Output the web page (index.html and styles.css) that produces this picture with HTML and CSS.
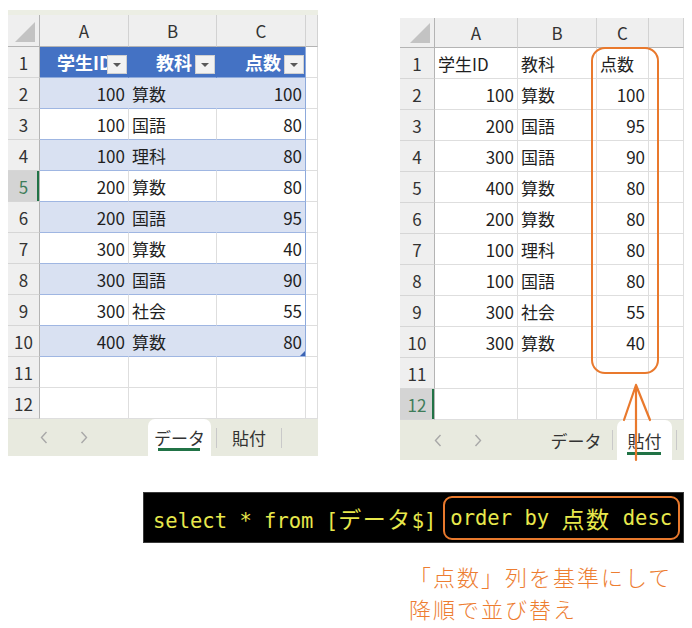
FILE: index.html
```html
<!DOCTYPE html>
<html lang="ja">
<head>
<meta charset="utf-8">
<title>Sheet sort</title>
<link rel="stylesheet" href="styles.css">
</head>
<body>
<div class="page">
  <div class="sheets">
    <div class="sheet sheet-left">
      <div class="strip"></div>
      <div class="grid grid-left">
        <div class="corner"></div>
        <div class="ch">A</div><div class="ch">B</div><div class="ch">C</div><div class="ch"></div>

        <div class="rh">1</div>
        <div class="th th-first">学生ID<span class="dd"></span></div>
        <div class="th">教科<span class="dd"></span></div>
        <div class="th tr">点数<span class="dd"></span></div>
        <div class="c"></div>

        <div class="rh">2</div>
        <div class="c num t band">100</div><div class="c txt t band">算数</div><div class="c num t band tr">100</div><div class="c"></div>
        <div class="rh">3</div>
        <div class="c num t">100</div><div class="c txt t">国語</div><div class="c num t tr">80</div><div class="c"></div>
        <div class="rh">4</div>
        <div class="c num t band">100</div><div class="c txt t band">理科</div><div class="c num t band tr">80</div><div class="c"></div>
        <div class="rh rh-sel">5</div>
        <div class="c num t">200</div><div class="c txt t">算数</div><div class="c num t tr">80</div><div class="c"></div>
        <div class="rh">6</div>
        <div class="c num t band">200</div><div class="c txt t band">国語</div><div class="c num t band tr">95</div><div class="c"></div>
        <div class="rh">7</div>
        <div class="c num t">300</div><div class="c txt t">算数</div><div class="c num t tr">40</div><div class="c"></div>
        <div class="rh">8</div>
        <div class="c num t band">300</div><div class="c txt t band">国語</div><div class="c num t band tr">90</div><div class="c"></div>
        <div class="rh">9</div>
        <div class="c num t">300</div><div class="c txt t">社会</div><div class="c num t tr">55</div><div class="c"></div>
        <div class="rh">10</div>
        <div class="c num t band">400</div><div class="c txt t band">算数</div><div class="c num t band tr handle">80</div><div class="c"></div>
        <div class="rh">11</div>
        <div class="c"></div><div class="c"></div><div class="c"></div><div class="c"></div>
        <div class="rh">12</div>
        <div class="c"></div><div class="c"></div><div class="c"></div><div class="c"></div>
      </div>
      <div class="tabbar">
        <div class="nav nav-left">
          <svg class="chev" width="8" height="13" viewBox="0 0 8 13"><path d="M6.5 1 L1.5 6.5 L6.5 12" /></svg>
          <svg class="chev" width="8" height="13" viewBox="0 0 8 13"><path d="M1.5 1 L6.5 6.5 L1.5 12" /></svg>
        </div>
        <div class="tab active tab-l1">データ</div>
        <div class="sep"></div>
        <div class="tab tab-l2">貼付</div>
        <div class="sep sep-flush"></div>
      </div>
    </div>

    <div class="sheet sheet-right">
      <div class="grid grid-right">
        <div class="corner"></div>
        <div class="ch">A</div><div class="ch">B</div><div class="ch">C</div><div class="ch"></div>

        <div class="rh">1</div>
        <div class="c txt">学生ID</div><div class="c txt">教科</div><div class="c txt">点数</div><div class="c"></div>
        <div class="rh">2</div>
        <div class="c num">100</div><div class="c txt">算数</div><div class="c num">100</div><div class="c"></div>
        <div class="rh">3</div>
        <div class="c num">200</div><div class="c txt">国語</div><div class="c num">95</div><div class="c"></div>
        <div class="rh">4</div>
        <div class="c num">300</div><div class="c txt">国語</div><div class="c num">90</div><div class="c"></div>
        <div class="rh">5</div>
        <div class="c num">400</div><div class="c txt">算数</div><div class="c num">80</div><div class="c"></div>
        <div class="rh">6</div>
        <div class="c num">200</div><div class="c txt">算数</div><div class="c num">80</div><div class="c"></div>
        <div class="rh">7</div>
        <div class="c num">100</div><div class="c txt">理科</div><div class="c num">80</div><div class="c"></div>
        <div class="rh">8</div>
        <div class="c num">100</div><div class="c txt">国語</div><div class="c num">80</div><div class="c"></div>
        <div class="rh">9</div>
        <div class="c num">300</div><div class="c txt">社会</div><div class="c num">55</div><div class="c"></div>
        <div class="rh">10</div>
        <div class="c num">300</div><div class="c txt">算数</div><div class="c num">40</div><div class="c"></div>
        <div class="rh">11</div>
        <div class="c"></div><div class="c"></div><div class="c"></div><div class="c"></div>
        <div class="rh rh-sel">12</div>
        <div class="c"></div><div class="c"></div><div class="c"></div><div class="c"></div>
      </div>
      <div class="tabbar tabbar-right">
        <div class="nav nav-right">
          <svg class="chev" width="8" height="13" viewBox="0 0 8 13"><path d="M6.5 1 L1.5 6.5 L6.5 12" /></svg>
          <svg class="chev" width="8" height="13" viewBox="0 0 8 13"><path d="M1.5 1 L6.5 6.5 L1.5 12" /></svg>
        </div>
        <div class="tab tab-r1">データ</div>
        <div class="sep"></div>
        <div class="tab active tab-r2">貼付</div>
        <div class="sep"></div>
      </div>

      <div class="highlight"></div>
      <svg class="arrow" width="40" height="110" viewBox="0 0 40 110">
        <path d="M16 25 L16 100 M16 25 L4 60 M16 25 L30 60" />
      </svg>
    </div>
  </div>

  <div class="sql">
    <span class="code">select * from [<span class="wide">データ</span>$]</span><span class="code boxed">order by <span class="wide">点数</span> desc</span>
  </div>

  <div class="caption">
    <div>「点数」列を基準にして</div>
    <div>降順で並び替え</div>
  </div>
</div>
</body>
</html>
```

FILE: styles.css
```css
html, body {
  margin: 0;
  padding: 0;
  background: #ffffff;
}

.page {
  width: 692px;
  height: 628px;
  overflow: hidden;
  font-family: "Noto Sans CJK JP", "Noto Sans", sans-serif;
  color: #1f1f1f;
}

.sheets {
  display: flex;
  align-items: flex-start;
}

.sheet {
  position: relative;
}

.sheet-left {
  width: 310px;
  margin: 10px 0 0 8px;
}

.sheet-right {
  width: 284px;
  margin: 18px 0 0 82px;
}

.strip {
  height: 5px;
  background: #eceee4;
}

.grid {
  display: grid;
  font-size: 17px;
}

.grid-left {
  grid-template-columns: 32px 89px 88px 89px 12px;
  grid-template-rows: 32px repeat(12, 31px);
}

.grid-right {
  grid-template-columns: 35px 83px 79px 52px 35px;
  grid-template-rows: 30px repeat(12, 31px);
}

.grid > div {
  box-sizing: border-box;
  display: flex;
  align-items: center;
  white-space: nowrap;
  overflow: hidden;
}

.corner {
  position: relative;
  background: #efefef;
  border-right: 1px solid #b4b4b4;
  border-bottom: 1px solid #b4b4b4;
}

.corner::after {
  content: "";
  position: absolute;
  right: 4px;
  bottom: 4px;
  width: 20px;
  height: 20px;
  background: #c3c3c3;
  clip-path: polygon(100% 0, 100% 100%, 0 100%);
}

.ch {
  background: #efefef;
  justify-content: center;
  color: #333333;
  border-right: 1px solid #d2d2d2;
  border-bottom: 1px solid #b4b4b4;
}

.rh {
  background: #efefef;
  justify-content: center;
  color: #333333;
  border-right: 1px solid #b4b4b4;
  border-bottom: 1px solid #d6d6d6;
}

.rh-sel {
  background: #d4d4d4;
  color: #3f7d5a;
  box-shadow: inset -2px 0 0 #217346;
}

.c {
  background: #ffffff;
  border-right: 1px solid #dedede;
  border-bottom: 1px solid #dedede;
}

.num {
  justify-content: flex-end;
  padding-right: 3px;
}

.txt {
  padding-left: 3px;
}

.th {
  position: relative;
  background: #4472c4;
  color: #ffffff;
  font-weight: 700;
  font-size: 18px;
  justify-content: flex-end;
  padding-right: 24px;
  border-right: 1px solid #4472c4;
  border-bottom: 1px solid #8eaadb;
}

.th-first {
  justify-content: flex-start;
  padding-left: 17px;
  padding-right: 0;
}

.dd {
  position: absolute;
  right: 1px;
  bottom: 3px;
  width: 20px;
  height: 19px;
  box-sizing: border-box;
  background: #f2f2f2;
  border: 1px solid #d0d0d0;
}

.dd::after {
  content: "";
  position: absolute;
  left: 5px;
  top: 7px;
  border-left: 4px solid transparent;
  border-right: 4px solid transparent;
  border-top: 4px solid #595959;
}

.t {
  border-bottom: 1px solid #9fb6e2;
}

.band {
  background: #d9e1f2;
  border-right-color: #d9e1f2;
}

.tr {
  border-right: 1px solid #8eaadb;
}

.grid > .handle {
  position: relative;
  overflow: visible;
}

.handle::after {
  content: "";
  position: absolute;
  right: 0;
  bottom: 0;
  border-left: 5px solid transparent;
  border-bottom: 5px solid #3c64b4;
}

/* tab bar */
.tabbar {
  display: flex;
  align-items: stretch;
  height: 37px;
  background: #e8eadf;
  font-size: 17px;
  color: #333333;
}

.tabbar-right {
  height: 40px;
}

.nav {
  display: flex;
  align-items: center;
}

.nav-left {
  width: 140px;
  padding-left: 32px;
  box-sizing: border-box;
  gap: 32px;
}

.nav-right {
  width: 145px;
  padding-left: 34px;
  box-sizing: border-box;
  gap: 32px;
}

.chev path {
  fill: none;
  stroke: #a8a8a8;
  stroke-width: 1.4;
}

.tab {
  position: relative;
  display: flex;
  align-items: center;
  justify-content: center;
}

.tab.active {
  background: #ffffff;
  border-radius: 7px 7px 0 0;
}

.tab.active::after {
  content: "";
  position: absolute;
  left: 10px;
  right: 11px;
  bottom: 5px;
  height: 3px;
  background: #217346;
}

.tab-l1 { width: 63px; }
.tab-l2 { width: 64px; }
.tab-r1 { width: 62px; }
.tab-r2 { width: 55px; margin-left: 4px; margin-right: 4px; }

.sep {
  width: 1px;
  align-self: center;
  height: 20px;
  background: #c9c9c9;
  margin-left: 5px;
}

.tabbar-right .tab-r2 + .sep {
  margin-left: 0;
}

.sep-flush {
  margin-left: 0;
}

/* overlays on right sheet */
.highlight {
  position: absolute;
  left: 191px;
  top: 29px;
  width: 68px;
  height: 327px;
  box-sizing: border-box;
  border: 2.5px solid #e9792d;
  border-radius: 14px;
}

.arrow {
  position: absolute;
  left: 220px;
  top: 342px;
}

.arrow path {
  fill: none;
  stroke: #e9792d;
  stroke-width: 2.2;
  stroke-linecap: round;
}

/* SQL strip */
.sql {
  box-sizing: border-box;
  margin: 32px 0 0 143px;
  width: 541px;
  height: 51px;
  background: #000000;
  border: 1px solid #3a3a3a;
  display: flex;
  align-items: center;
  padding-left: 9px;
}

.code {
  font-family: "DejaVu Sans Mono", "Noto Sans CJK JP", monospace;
  font-size: 20.5px;
  color: #e8e84c;
  white-space: pre;
}

.wide {
  font-family: "Noto Sans CJK JP", sans-serif;
  font-size: 23px;
  letter-spacing: 1.5px;
}

.boxed {
  display: inline-flex;
  align-items: center;
  height: 44px;
  box-sizing: border-box;
  border: 2px solid #e9792d;
  border-radius: 9px;
  padding: 0 6px 0 5px;
  margin-left: 7px;
}

/* caption */
.caption {
  margin: 17px 0 0 409px;
  font-size: 22px;
  letter-spacing: 2px;
  line-height: 32px;
  font-weight: 300;
  color: #ed7d31;
}
```
